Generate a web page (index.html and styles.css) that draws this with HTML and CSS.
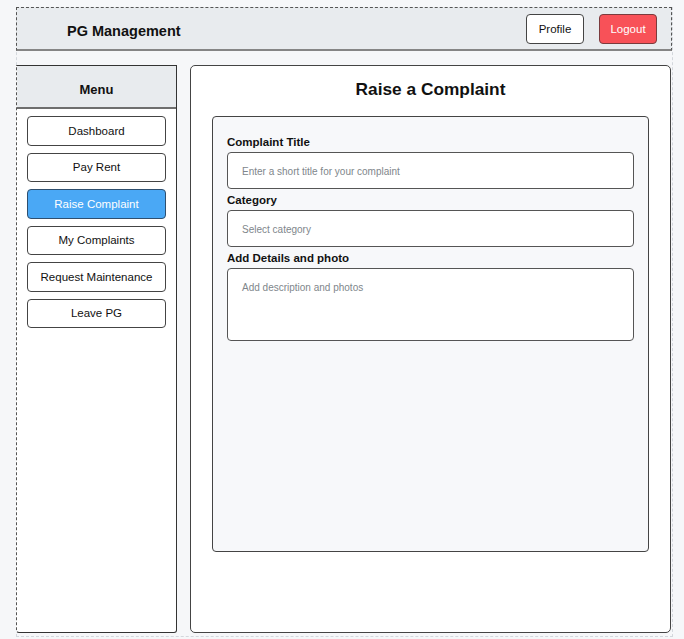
FILE: index.html
```html
<!DOCTYPE html>
<html lang="en">
<head>
<meta charset="utf-8">
<title>PG Management - Raise a Complaint</title>
<link rel="stylesheet" href="styles.css">
</head>
<body>
<div class="app">
  <header class="topbar">
    <div class="brand">PG Management</div>
    <div class="actions">
      <button class="btn">Profile</button>
      <button class="btn btn-danger">Logout</button>
    </div>
  </header>
  <div class="layout">
    <aside class="sidebar">
      <div class="sidebar-head">Menu</div>
      <nav class="menu">
        <button class="menu-item">Dashboard</button>
        <button class="menu-item">Pay Rent</button>
        <button class="menu-item active">Raise Complaint</button>
        <button class="menu-item">My Complaints</button>
        <button class="menu-item">Request Maintenance</button>
        <button class="menu-item">Leave PG</button>
      </nav>
    </aside>
    <main class="main">
      <h1 class="title">Raise a Complaint</h1>
      <form class="card">
        <label class="label" for="ct">Complaint Title</label>
        <input class="field" id="ct" type="text" placeholder="Enter a short title for your complaint">
        <label class="label" for="cat">Category</label>
        <input class="field" id="cat" type="text" placeholder="Select category">
        <label class="label" for="det">Add Details and photo</label>
        <textarea class="field area" id="det" placeholder="Add description and photos"></textarea>
      </form>
    </main>
  </div>
</div>
</body>
</html>
```
FILE: styles.css
```css
* { box-sizing: border-box; }
html, body { margin: 0; padding: 0; }
body {
  background: #f6f7f9;
  font-family: "Liberation Sans", Arial, sans-serif;
  color: #111;
}
.app {
  margin: 7px 0 0 16px;
  width: 657px;
  height: 630px;
  border: 1px dashed #d3d7dc;
  border-top: none;
}
.topbar {
  margin-left: -1px;
  width: 656px;
  height: 44px;
  background: #e8ebee;
  border-top: 1px dashed #555;
  border-left: 1px dashed #555;
  border-right: 1px dashed #555;
  border-bottom: 2px solid #858585;
  display: flex;
  align-items: center;
  justify-content: space-between;
  padding: 0 14px 0 50px;
}
.brand {
  font-weight: bold;
  font-size: 14.5px;
  padding-top: 4px;
}
.actions { display: flex; gap: 15px; }
.btn {
  width: 58px;
  height: 30px;
  font-family: inherit;
  font-size: 11.5px;
  color: #111;
  background: #fff;
  border: 1px solid #444;
  border-radius: 4px;
  padding: 0;
}
.btn-danger {
  background: #f85158;
  color: #fff;
  border-color: #7a3b3d;
}
.layout {
  display: flex;
  gap: 13px;
  margin: 14px 1px 0 -1px;
}
.sidebar {
  width: 161px;
  height: 568px;
  background: #fff;
  border: 1px solid #333;
  border-left: 1px dashed #555;
  border-radius: 0 0 3px 3px;
}
.sidebar-head {
  height: 43px;
  background: #e8ebee;
  border-bottom: 2px solid #6e6e6e;
  display: flex;
  align-items: center;
  justify-content: center;
  font-weight: bold;
  font-size: 13px;
  padding-top: 6px;
}
.menu {
  display: flex;
  flex-direction: column;
  gap: 7px;
  padding: 7px 10px 0 10px;
}
.menu-item {
  height: 29.5px;
  background: #fff;
  border: 1px solid #444;
  border-radius: 4px;
  font-family: inherit;
  font-size: 11.5px;
  color: #111;
  padding: 0;
}
.menu-item.active {
  background: #4aa8f5;
  color: #fff;
  border-color: #2f4f6e;
}
.main {
  flex: 1;
  height: 568px;
  background: #fff;
  border: 1px solid #444;
  border-radius: 5px;
  padding: 12px 21px 0 21px;
}
.title {
  margin: 0 0 16px;
  text-align: center;
  font-size: 17.3px;
  line-height: 22px;
  font-weight: bold;
}
.card {
  height: 436px;
  margin: 0;
  background: #f7f8fa;
  border: 1px solid #444;
  border-radius: 4px;
  padding: 18px 14px 0 14px;
  display: flex;
  flex-direction: column;
}
.label {
  font-weight: bold;
  font-size: 11.5px;
  line-height: 14px;
  margin-bottom: 3px;
}
.field {
  height: 37px;
  width: 100%;
  border: 1px solid #555;
  border-radius: 4px;
  background: #fff;
  font-family: inherit;
  font-size: 10px;
  padding: 2px 14px 0;
  margin: 0 0 4px;
  color: #222;
  outline: none;
}
.field::placeholder { color: #80868b; opacity: 1; }
.area {
  height: 73px;
  padding: 13px 14px;
  resize: none;
}
```
